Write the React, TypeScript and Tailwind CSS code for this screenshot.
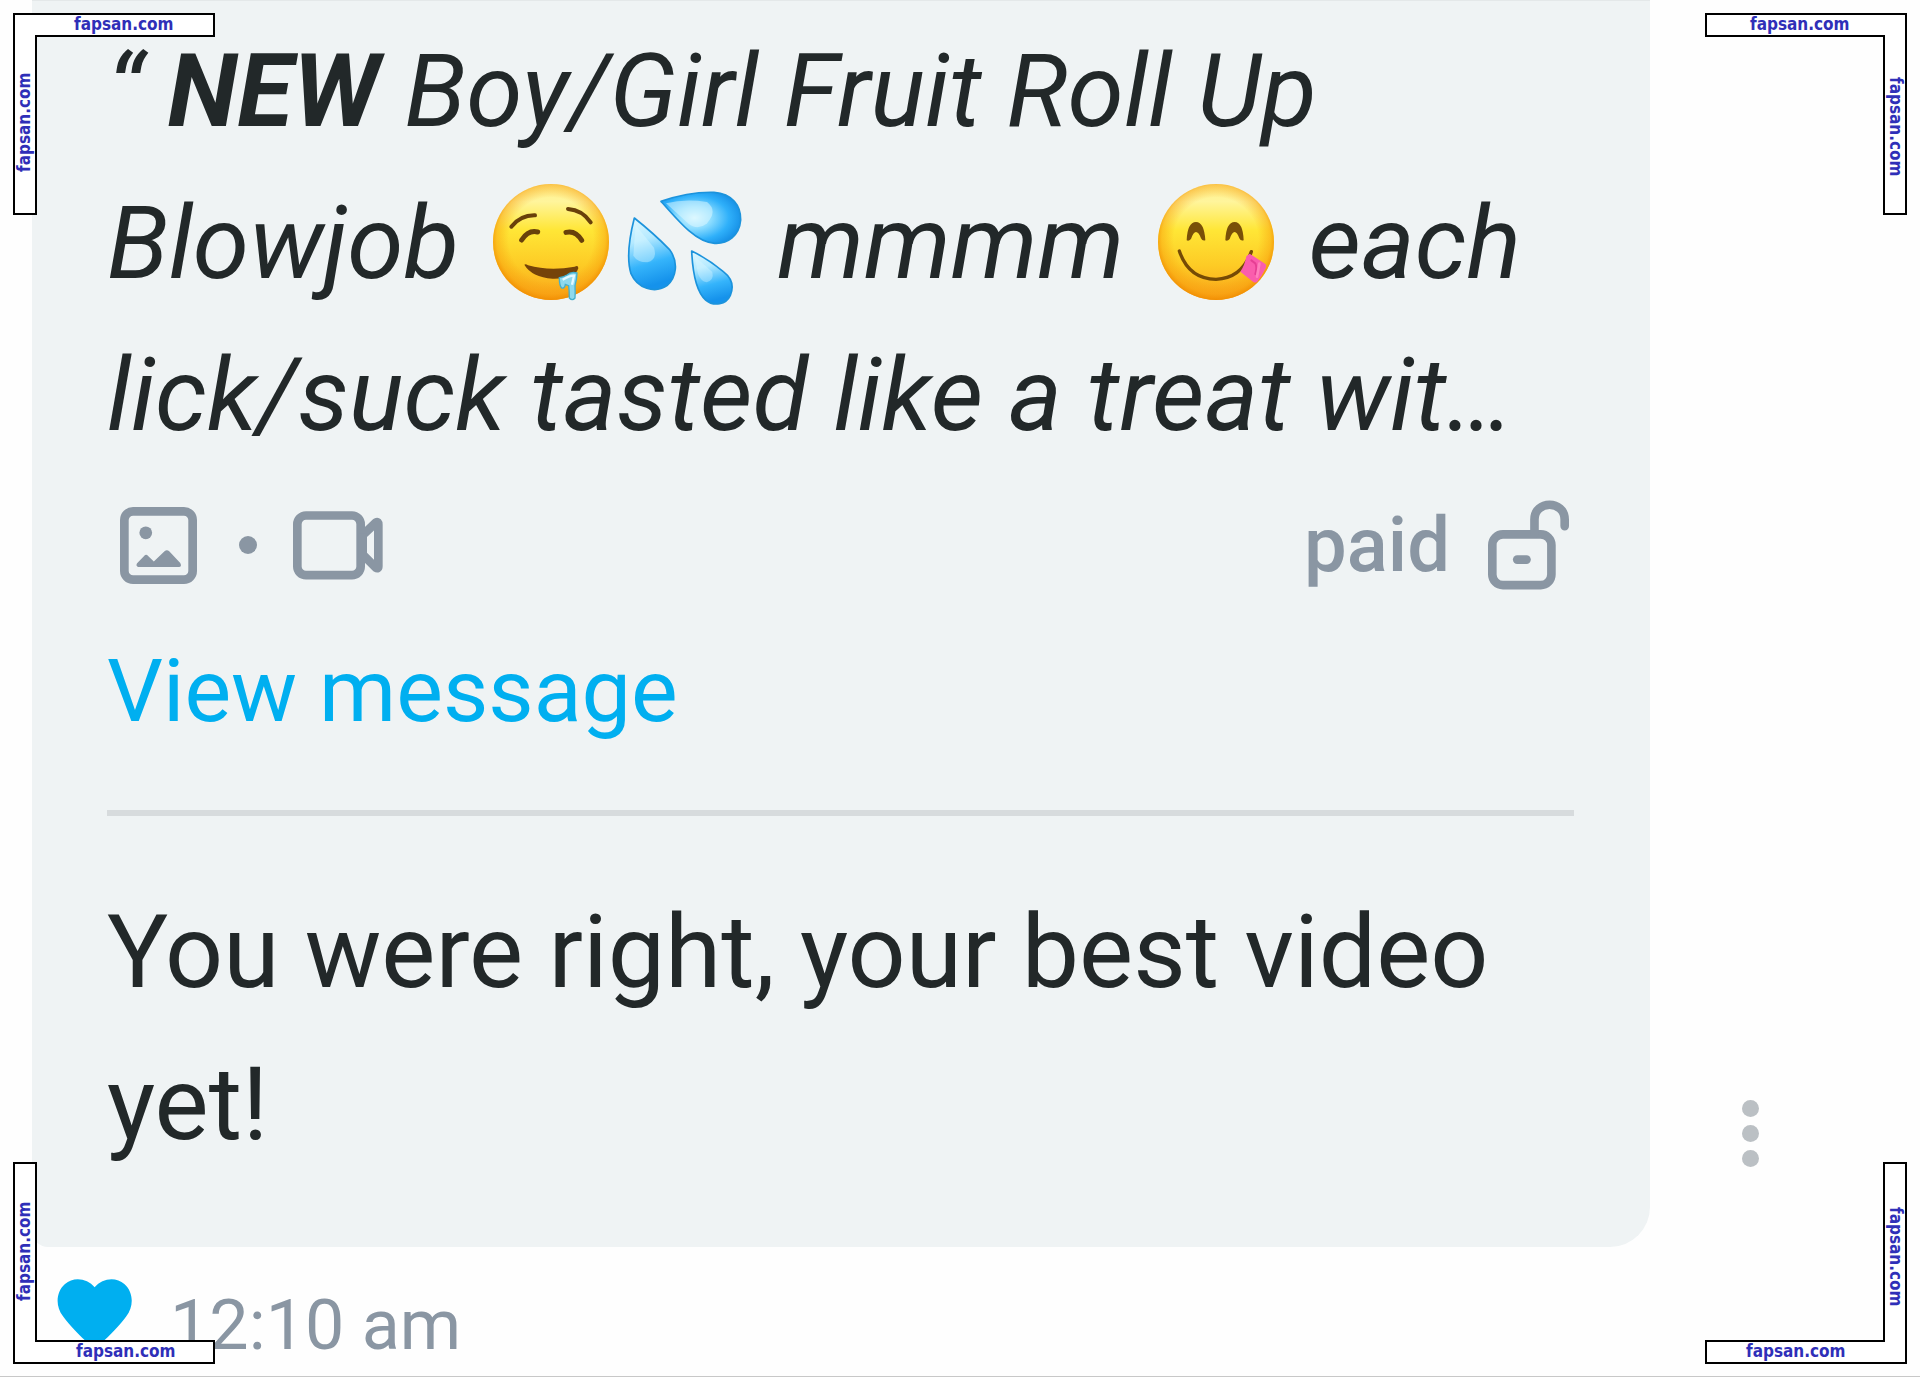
import type { ReactNode } from "react";

const SITE = "fapsan.com";

type FrameProps = {
  className: string;
  outline: string;
  row: [number, number];
  column: [number, number];
  angle: number;
};

// L-shaped corner label, one arm horizontal and one vertical
function CornerFrame({ className, outline, row, column, angle }: FrameProps) {
  return (
    <svg
      className={`pointer-events-none absolute size-[202px] font-['DejaVu_Sans_Condensed','DejaVu_Sans',sans-serif] text-[17px] font-bold ${className}`}
      viewBox="0 0 202 202"
      fill="#2f2fb8"
    >
      <path d={outline} fill="#fff" stroke="#000" strokeWidth="2" />
      <text x={row[0]} y={row[1]}>{SITE}</text>
      <text transform={`translate(${column[0]} ${column[1]}) rotate(${angle})`}>{SITE}</text>
    </svg>
  );
}

function Emoji({ label, viewBox, children }: { label: string; viewBox: string; children: ReactNode }) {
  return (
    <svg
      role="img"
      aria-label={label}
      viewBox={viewBox}
      className="mx-[9px] inline-block size-[116px] overflow-visible align-[-22px]"
    >
      {children}
    </svg>
  );
}

function FaceFill({ id }: { id: string }) {
  return (
    <defs>
      <radialGradient id={`${id}-edge`} cx="50%" cy="48%" r="52%">
        <stop offset="0.7" stopColor="#f79a0a" stopOpacity="0" />
        <stop offset="0.9" stopColor="#f79a0a" stopOpacity="0.45" />
        <stop offset="1" stopColor="#f08c00" stopOpacity="0.9" />
      </radialGradient>
      <linearGradient id={`${id}-base`} x1="0" y1="0" x2="0" y2="1">
        <stop offset="0" stopColor="#fff08a" />
        <stop offset="0.15" stopColor="#fff59c" />
        <stop offset="0.4" stopColor="#ffe636" />
        <stop offset="0.7" stopColor="#fdcb25" />
        <stop offset="1" stopColor="#f9a21a" />
      </linearGradient>
    </defs>
  );
}

function DroolingFace() {
  return (
    <Emoji label="Drooling face" viewBox="41 69 348 348">
      <FaceFill id="drool" />
      <circle cx="215" cy="243" r="174" fill="url(#drool-base)" />
      <circle cx="215" cy="243" r="174" fill="url(#drool-edge)" />
      <g fill="none" stroke="#69400a" strokeLinecap="round">
        <path d="M96 197Q124 162 167 163" strokeWidth="12" />
        <path d="M266 144Q309 147 334 184" strokeWidth="12" />
        <path d="M127 237Q147 206 175 213" strokeWidth="15" />
        <path d="M260 214Q289 207 307 238" strokeWidth="15" />
      </g>
      <path d="M135 311Q139 307 146 313Q211 331 286 317Q297 311 297 322Q287 354 220 353Q157 348 135 311Z" fill="#754309" />
      <path
        d="M240 350Q255 348 263 342Q275 331 293 336Q293 352 287 374Q288 394 287 411Q279 421 270 411Q270 390 268 374L258 370Q256 383 247 381Q240 374 240 350Z"
        fill="#8ed9ee"
        stroke="#44afcf"
        strokeWidth="4"
      />
      <path d="M250 356Q273 343 284 344L278 371" fill="none" stroke="#e5f9ff" strokeWidth="7" />
    </Emoji>
  );
}

function SavoringFace() {
  return (
    <Emoji label="Face savoring food" viewBox="55 69 348 348">
      <FaceFill id="savor" />
      <circle cx="229" cy="243" r="174" fill="url(#savor-base)" />
      <circle cx="229" cy="243" r="174" fill="url(#savor-edge)" />
      <path d="M141 238Q143 184 169 183Q194 184 197 238Q188 241 184 232Q177 213 169 213Q161 213 154 234Q147 242 141 238Z" fill="#795008" />
      <path d="M257 238Q259 184 285 183Q310 184 312 238Q303 241 299 232Q292 213 285 213Q277 213 270 234Q263 242 257 238Z" fill="#795008" />
      <path d="M119 270Q147 354 229 355Q306 352 335 272" fill="none" stroke="#754a05" strokeWidth="10" strokeLinecap="round" />
      <path d="M330 278L377 309Q382 314 377 323Q365 348 352 363Q346 367 340 362L302 332Q315 314 320 286Z" fill="#fa5dad" />
      <path d="M335 298L347 307Q353 319 347 339" fill="none" stroke="#e63f94" strokeWidth="6" strokeLinecap="round" />
      <path d="M359 308L352 347" fill="none" stroke="#ff80bd" strokeWidth="8" strokeLinecap="round" />
    </Emoji>
  );
}

function SweatDroplets() {
  return (
    <Emoji label="Sweat droplets" viewBox="449 69 348 348">
      <defs>
        <radialGradient id="drop-a" cx="0.42" cy="0.5" r="0.62">
          <stop offset="0" stopColor="#d8f6ff" />
          <stop offset="0.35" stopColor="#8bdcff" />
          <stop offset="0.7" stopColor="#2fb0fa" />
          <stop offset="1" stopColor="#148de4" />
        </radialGradient>
        <linearGradient id="drop-b" x1="0" y1="0" x2="0.2" y2="1">
          <stop offset="0" stopColor="#e2f9ff" />
          <stop offset="0.35" stopColor="#b5eaff" />
          <stop offset="0.7" stopColor="#35b4fb" />
          <stop offset="1" stopColor="#1592eb" />
        </linearGradient>
      </defs>
      <g stroke="#1c93dc" strokeWidth="5" strokeLinejoin="round">
        <path d="M551 121Q635 92 710 94C765 98 791 134 790 177C786 225 751 249 712 247C658 245 607 185 551 121Z" fill="url(#drop-a)" />
        <path d="M471 171Q530 218 576 265C605 303 597 350 569 374C532 399 480 382 461 338C446 290 457 226 471 171Z" fill="url(#drop-b)" />
        <path d="M643 270Q691 293 738 332C764 352 770 377 759 403C747 430 710 438 685 417C655 391 646 335 643 270Z" fill="url(#drop-b)" />
      </g>
      <path d="M566 127Q622 113 689 123Q723 149 688 188Q659 210 632 187Z" fill="#e2f9ff" opacity="0.5" />
      <path d="M475 193L530 260Q541 297 510 304Q480 304 468 284Z" fill="#e2f9ff" opacity="0.4" />
      <path d="M652 286L705 333Q711 357 688 364Q670 360 662 338Z" fill="#e2f9ff" opacity="0.35" />
    </Emoji>
  );
}

function ImageIcon() {
  return (
    <svg className="size-[77px]" viewBox="60 82 230 230" fill="currentColor">
      <rect x="73" y="95" width="204" height="204" rx="26" fill="none" stroke="currentColor" strokeWidth="26" />
      <circle cx="137" cy="159" r="19" />
      <path d="M111 250L132 228Q138 222 144 228L161 245L193 214Q200 208 207 214L240 249Q246 260 236 261H115Q106 259 111 250Z" />
    </svg>
  );
}

function VideoIcon() {
  return (
    <svg className="h-[69px] w-[90px]" viewBox="580 94 270 206" fill="none" stroke="currentColor" strokeWidth="26" strokeLinejoin="round">
      <rect x="593" y="107" width="190" height="179" rx="26" />
      <path d="M789 166L829 128Q836 124 836 135V259Q836 268 828 263L789 224" />
      <path d="M789 160V232" />
    </svg>
  );
}

function UnlockIcon() {
  return (
    <svg className="h-[90px] w-[81px]" viewBox="626 56 244 270" fill="none" stroke="currentColor" strokeWidth="26" strokeLinecap="round">
      <rect x="639" y="159" width="178" height="153" rx="32" />
      <path d="M766 156V114C766 55 857 55 857 114V134" />
      <path d="M714 235H742" />
    </svg>
  );
}

export default function App() {
  return (
    <div className="relative min-h-screen border-b border-[#c8c8c8] bg-[#fefefe] font-[Roboto,sans-serif] text-[#222829]">
      <main className="flex items-end">
        <article className="ml-8 flex-1 rounded-br-[40px] rounded-bl-2xl border-t border-[#e4e8e9] bg-[#eff3f4] pt-[14px] pr-[76px] pb-[67px] pl-[75px]">
          <blockquote className="text-[102px] leading-[152px] whitespace-nowrap italic">
            “ <b>NEW</b> Boy/Girl Fruit Roll Up
            <br />
            Blowjob <DroolingFace />
            <SweatDroplets /> mmmm <SavoringFace /> each
            <br />
            lick/suck tasted like a treat wit…
          </blockquote>

          <div className="mt-[29px] flex items-center pr-[5px] pl-[13px] text-[#8a96a3]">
            <ImageIcon />
            <span className="mr-9 ml-[42px] size-[18px] rounded-full bg-current" />
            <VideoIcon />
            <span className="mr-[38px] ml-auto text-[76px] leading-[90px] font-medium">paid</span>
            <UnlockIcon />
          </div>

          <a href="#message" className="mt-[49px] block text-[88px] leading-[104px] text-[#00aff0]">
            View message
          </a>

          <hr className="mt-[67px] border-t-[6px] border-[#d7dbdd]" />

          <p className="mt-[60px] text-[102px] leading-[152px]">
            You were right, your best video
            <br />
            yet!
          </p>
        </article>

        <div className="flex w-[270px] shrink-0 pb-[80px] pl-[92px]">
          <button type="button" aria-label="Message options" className="flex flex-col gap-[8px]">
            <span className="size-[17px] rounded-full bg-[#bbc0c4]" />
            <span className="size-[17px] rounded-full bg-[#bbc0c4]" />
            <span className="size-[17px] rounded-full bg-[#bbc0c4]" />
          </button>
        </div>
      </main>

      <footer className="flex items-start gap-[38px] pt-8 pl-[57px] text-[#8a96a3]">
        <button type="button" aria-label="Like">
          <svg className="h-[68px] w-[75px]" viewBox="172 418 225 204" fill="#00aff0">
            <path d="M285 443C308 415 349 411 374 433C402 458 403 500 380 530C360 557 331 587 303 613Q285 627 267 613C239 587 210 557 190 530C167 500 168 458 196 433C221 411 262 415 285 443Z" />
          </svg>
        </button>
        <time className="pt-[6px] text-[70px] leading-[80px]">12:10 am</time>
      </footer>

      <CornerFrame
        className="top-[13px] left-[13px]"
        outline="M1 1H201V23H23V201H1Z"
        row={[61, 17]}
        column={[17, 159]}
        angle={-90}
      />
      <CornerFrame
        className="top-[13px] right-[13px]"
        outline="M1 1H201V201H179V23H1Z"
        row={[45, 17]}
        column={[185, 64]}
        angle={90}
      />
      <CornerFrame
        className="bottom-[12px] left-[13px]"
        outline="M1 1H23V179H201V201H1Z"
        row={[63, 195]}
        column={[17, 139]}
        angle={-90}
      />
      <CornerFrame
        className="right-[13px] bottom-[12px]"
        outline="M179 1H201V201H1V179H179Z"
        row={[41, 195]}
        column={[185, 45]}
        angle={90}
      />
    </div>
  );
}
